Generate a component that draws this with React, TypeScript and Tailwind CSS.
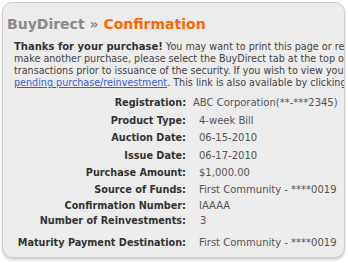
import React from 'react';

const rows: { label: string; value: string; h: string; pad: string }[] = [
  { label: 'Registration:', value: 'ABC Corporation(**-***2345)', h: 'h-[18px]', pad: 'pl-[7px]' },
  { label: 'Product Type:', value: '4-week Bill', h: 'h-[17px]', pad: 'pl-[13px]' },
  { label: 'Auction Date:', value: '06-15-2010', h: 'h-[18px]', pad: 'pl-[13px]' },
  { label: 'Issue Date:', value: '06-17-2010', h: 'h-[17px]', pad: 'pl-[13px]' },
  { label: 'Purchase Amount:', value: '$1,000.00', h: 'h-[17px]', pad: 'pl-[13px]' },
  { label: 'Source of Funds:', value: 'First Community - ****0019', h: 'h-[16px]', pad: 'pl-[13px]' },
  { label: 'Confirmation Number:', value: 'IAAAA', h: 'h-[15px]', pad: 'pl-[13px]' },
  { label: 'Number of Reinvestments:', value: '3', h: 'h-[22px]', pad: 'pl-[14px]' },
  { label: 'Maturity Payment Destination:', value: 'First Community - ****0019', h: 'h-[17px]', pad: 'pl-[13px]' },
];

export default function App() {
  return (
    <div className="w-[348px] h-[263px] bg-white p-[2px] font-['DejaVu_Sans',Verdana,sans-serif]">
      <div className="h-[256px] w-[343px] overflow-hidden rounded-[10px] border border-[#cdcdcd] bg-[#ececec] shadow-[0_2px_3px_rgba(0,0,0,0.18)]">
        <h1 className="mt-[11px] pl-[4px] text-[14px] font-bold leading-[20px] whitespace-nowrap">
          <span className="text-[#8a8a8a]">BuyDirect » </span>
          <span className="text-[#ff6600]">Confirmation</span>
        </h1>

        <p className="mt-[7px] pl-[11px] text-[9.6px] leading-[12px] text-[#444] whitespace-nowrap">
          <b className="text-[10px] text-[#333]">Thanks for your purchase!</b> You may want to print this page or record the details for your files. To
          <br />
          make another purchase, please select the BuyDirect tab at the top of the page. You may change pending
          <br />
          transactions prior to issuance of the security. If you wish to view your purchase, go to the
          <br />
          <a href="#" className="text-[#3a5fd6] underline">pending purchase/reinvestment</a>. This link is also available by clicking on ManageDirect.
        </p>

        <div className="mt-[7px] whitespace-nowrap">
          {rows.map((r) => (
            <div key={r.label} className={`flex items-start ${r.h}`}>
              <div className="w-[183px] shrink-0 text-right text-[9.7px] font-bold text-[#333] leading-[13px]">{r.label}</div>
              <div className={`${r.pad} text-[10px] text-[#555] leading-[13px]`}>{r.value}</div>
            </div>
          ))}
        </div>
      </div>
    </div>
  );
}
